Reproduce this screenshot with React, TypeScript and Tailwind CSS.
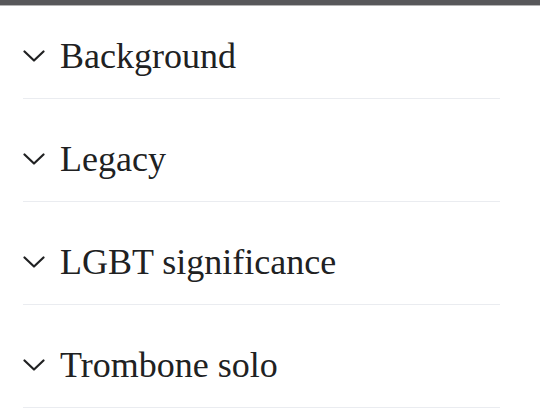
const sections = ["Background", "Legacy", "LGBT significance", "Trombone solo"]

function Chevron() {
  return (
    <svg width="22" height="12" viewBox="0 0 22 12" fill="none" aria-hidden="true" className="shrink-0">
      <path d="M1.5 1.5 L11 10.5 L20.5 1.5" stroke="#202122" strokeWidth="2.2" strokeLinecap="round" strokeLinejoin="round" />
    </svg>
  )
}

export default function App() {
  return (
    <div className="h-[415px] w-[540px] overflow-hidden bg-white">
      {/* top bar */}
      <div className="h-[5px] bg-[#58585a]" />
      <div className="h-px bg-[#b5b5b5]" />

      <div className="ml-[23px] w-[477px]">
        {sections.map((title, i) => (
          <div
            key={title}
            className={
              i === 0
                ? "flex items-center gap-[15px] border-b border-[#eaecf0] pt-[30px] pb-[22px]"
                : "flex items-center gap-[15px] border-b border-[#eaecf0] pt-[40px] pb-[22px]"
            }
          >
            <Chevron />
            <h2 className="text-[36px] leading-[40px] text-[#202122] [font-family:'Liberation_Serif',Georgia,serif]">
              {title}
            </h2>
          </div>
        ))}
      </div>
    </div>
  )
}
